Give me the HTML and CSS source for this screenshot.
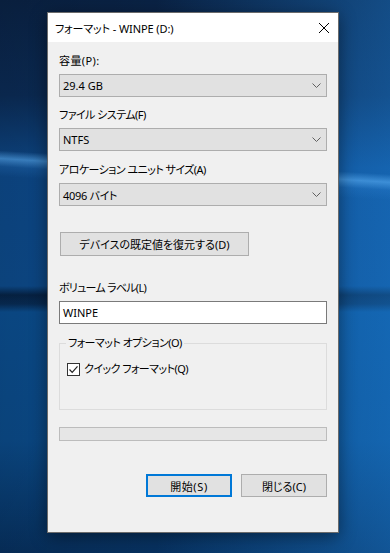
FILE: index.html
```html
<!DOCTYPE html>
<html lang="ja">
<head>
    <meta charset="UTF-8">
    <meta name="viewport" content="width=device-width, initial-scale=1.0">
    <title>フォーマット - WINPE (D:)</title>
    <link rel="stylesheet" href="styles.css">
</head>
<body>
    <div class="window">
        <div class="titlebar">
            <span class="title">フォーマット - WINPE (D:)</span>
            <span class="close">
                <svg width="10" height="10" viewBox="0 0 10 10"><path d="M0 0 L10 10 M10 0 L0 10" stroke="#000" stroke-width="1" fill="none"/></svg>
            </span>
        </div>

        <div class="content">
            <div class="field">
                <label class="wide">容量(P):</label>
                <div class="combo">
                    <span>29.4 GB</span>
                    <svg class="chev" width="9" height="5" viewBox="0 0 9 5"><path d="M0.5 0.5 L4.5 4.5 L8.5 0.5" stroke="#606060" fill="none"/></svg>
                </div>
            </div>

            <div class="field">
                <label class="tight">ファイル システム(F)</label>
                <div class="combo">
                    <span>NTFS</span>
                    <svg class="chev" width="9" height="5" viewBox="0 0 9 5"><path d="M0.5 0.5 L4.5 4.5 L8.5 0.5" stroke="#606060" fill="none"/></svg>
                </div>
            </div>

            <div class="field field-alloc">
                <label class="tight">アロケーション ユニット サイズ(A)</label>
                <div class="combo">
                    <span class="semi">4096 バイト</span>
                    <svg class="chev" width="9" height="5" viewBox="0 0 9 5"><path d="M0.5 0.5 L4.5 4.5 L8.5 0.5" stroke="#606060" fill="none"/></svg>
                </div>
            </div>

            <button class="btn restore">デバイスの既定値を復元する(D)</button>

            <div class="field field-label">
                <label class="tighter">ボリューム ラベル(L)</label>
                <div class="textbox">WINPE</div>
            </div>

            <fieldset class="options">
                <legend class="tight">フォーマット オプション(O)</legend>
                <label class="check">
                    <span class="box">
                        <svg width="11" height="11" viewBox="0 0 11 11"><path d="M1.5 5.5 L4.2 8.3 L9.5 2.3" stroke="#222" stroke-width="1.2" fill="none"/></svg>
                    </span>
                    <span class="tight">クイック フォーマット(Q)</span>
                </label>
            </fieldset>

            <div class="progress"></div>

            <div class="actions">
                <button class="btn default">開始(S)</button>
                <button class="btn">閉じる(C)</button>
            </div>
        </div>
    </div>
</body>
</html>
```

FILE: styles.css
```css
* {
    margin: 0;
    padding: 0;
    box-sizing: border-box;
}

body {
    width: 390px;
    height: 553px;
    overflow: hidden;
    padding: 12px 0 0 47px;
    font-family: "Noto Sans", "Noto Sans CJK JP", sans-serif;
    font-feature-settings: "palt";
    font-size: 11px;
    color: #000;
    background:
        linear-gradient(183.5deg, transparent 174px, rgba(100, 185, 255, 0.5) 182px, rgba(60, 150, 235, 0.15) 190px, transparent 200px),
        linear-gradient(to right, rgba(0, 0, 0, 0.1), rgba(0, 0, 0, 0) 40%, rgba(35, 145, 240, 0.38)),
        linear-gradient(to bottom, #0a2244 0, #0b2b55 95px, #0d4888 168px, #0d4a8a 286px, #062346 295px, #082c55 304px, #0b4d8e 312px, #0b4a88 440px, #07305e 553px);
}

/* Japanese kana runs a bit narrower than kanji in the dialog font */
.tight {
    letter-spacing: -0.55px;
}

.tighter {
    letter-spacing: -0.75px;
}

.semi {
    letter-spacing: -0.3px;
}

.wide {
    letter-spacing: 0.4px;
}

.window {
    width: 292px;
    height: 521px;
    border: 1px solid #6b6b6b;
    background-color: #f0f0f0;
    box-shadow: 0 4px 16px rgba(0, 0, 0, 0.45);
    display: flex;
    flex-direction: column;
}

.titlebar {
    height: 29px;
    background-color: #fff;
    display: flex;
    align-items: center;
    justify-content: space-between;
    padding: 0 9px 0 7px;
}

.title {
    letter-spacing: -0.1px;
}

.close svg {
    display: block;
}

.content {
    padding: 11px 11px 0;
    display: flex;
    flex-direction: column;
}

.field {
    display: flex;
    flex-direction: column;
    gap: 5px;
}

.field + .field {
    margin-top: 10px;
}

.field-alloc {
    margin-top: 11px !important;
}

.field label {
    line-height: 16px;
}

.combo {
    height: 23px;
    background-color: #e1e1e1;
    border: 1px solid #adadad;
    display: flex;
    align-items: center;
    justify-content: space-between;
    padding: 0 5px 0 3px;
}

.chev {
    display: block;
}

.btn {
    font-family: inherit;
    font-feature-settings: "palt";
    font-size: 11px;
    color: #000;
    background-color: #e1e1e1;
    border: 1px solid #adadad;
    height: 23px;
    width: 86px;
}

.restore {
    margin: 26px 0 0 1px;
    width: 189px;
    height: 24px;
}

.field-label {
    margin-top: 24px;
}

.textbox {
    height: 23px;
    background-color: #fff;
    border: 1px solid #7a7a7a;
    display: flex;
    align-items: center;
    padding: 0 3px;
}

.options {
    margin-top: 11px;
    border: 1px solid #dcdcdc;
    padding: 10px 8px 32px 7px;
}

.options legend {
    line-height: 16px;
    padding: 0 2px;
    margin-left: -1px;
}

.check {
    display: flex;
    align-items: center;
    line-height: 16px;
    gap: 4px;
}

.box {
    width: 13px;
    height: 13px;
    border: 1px solid #333;
    background-color: #fff;
    display: flex;
    align-items: center;
    justify-content: center;
}

.box svg {
    display: block;
}

.progress {
    margin-top: 17px;
    height: 14px;
    background-color: #e6e6e6;
    border: 1px solid #bcbcbc;
}

.actions {
    margin-top: 33px;
    display: flex;
    justify-content: flex-end;
    gap: 9px;
}

.default {
    border: 2px solid #0078d7;
    letter-spacing: 0.6px;
}
```
